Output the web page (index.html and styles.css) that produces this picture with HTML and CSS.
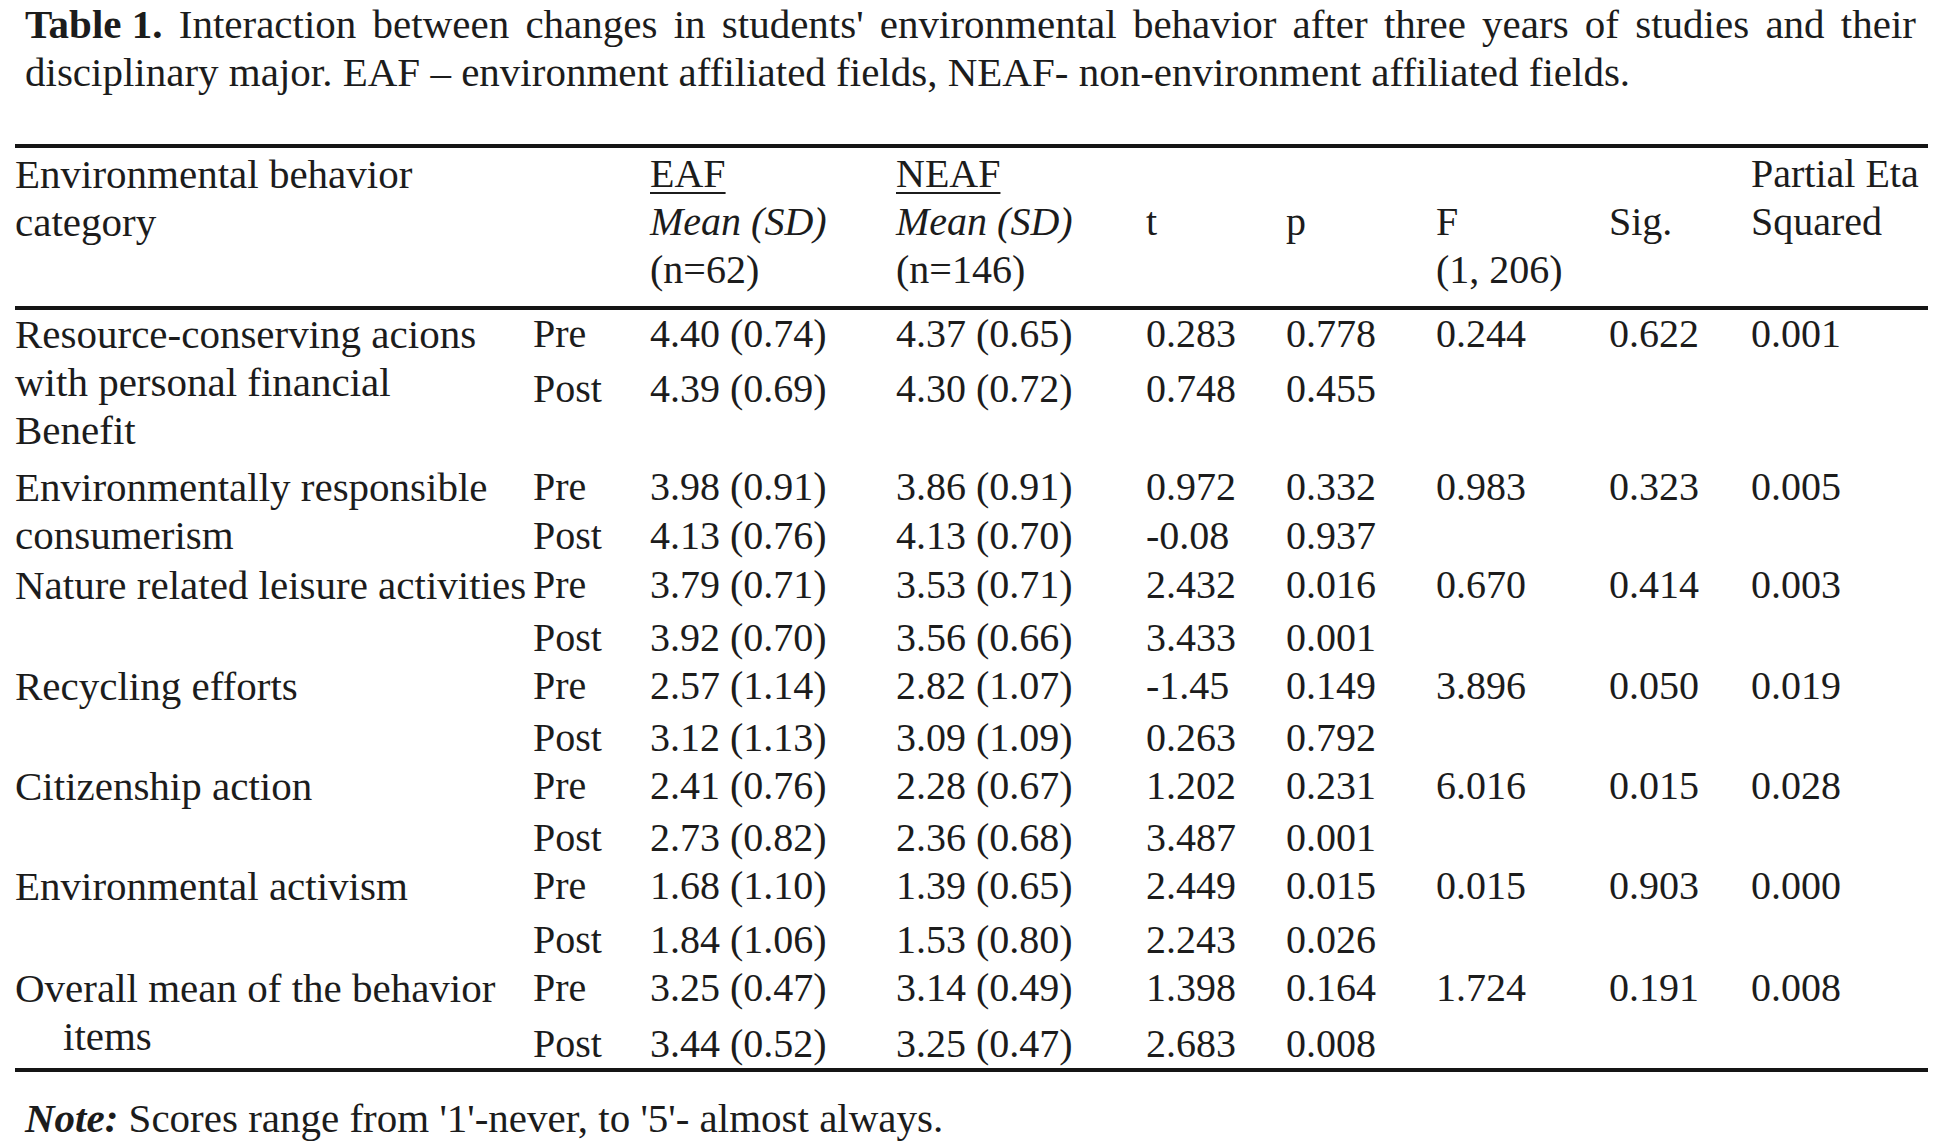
FILE: index.html
```html
<!DOCTYPE html>
<html lang="en">
<head>
<meta charset="utf-8">
<title>Table 1</title>
<link rel="stylesheet" href="styles.css">
</head>
<body>
<div class="page">
  <p class="caption"><b class="lbl">Table 1.</b> Interaction between changes in students' environmental behavior after three years of studies and their disciplinary major. EAF – environment affiliated fields, NEAF- non-environment affiliated fields.</p>

  <table class="data">
    <colgroup>
      <col class="c-cat">
      <col class="c-pp">
      <col class="c-eaf">
      <col class="c-neaf">
      <col class="c-t">
      <col class="c-p">
      <col class="c-f">
      <col class="c-sig">
      <col class="c-eta">
    </colgroup>
    <thead>
      <tr>
        <th class="wide">Environmental behavior<br>category</th>
        <th></th>
        <th><span class="ul">EAF</span><br><i>Mean (SD)</i><br>(n=62)</th>
        <th><span class="ul">NEAF</span><br><i>Mean (SD)</i><br>(n=146)</th>
        <th class="l2">t</th>
        <th class="l2">p</th>
        <th class="l2">F<br>(1, 206)</th>
        <th class="l2">Sig.</th>
        <th>Partial Eta<br>Squared</th>
      </tr>
    </thead>
    <tbody>
      <tr class="h55">
        <td class="cat" rowspan="2">Resource-conserving acions with personal financial<br>Benefit</td>
        <td>Pre</td><td>4.40 (0.74)</td><td>4.37 (0.65)</td><td>0.283</td><td>0.778</td><td>0.244</td><td>0.622</td><td>0.001</td>
      </tr>
      <tr class="h98">
        <td>Post</td><td>4.39 (0.69)</td><td>4.30 (0.72)</td><td>0.748</td><td>0.455</td><td></td><td></td><td></td>
      </tr>
    </tbody>
    <tbody>
      <tr class="h49">
        <td class="cat" rowspan="2">Environmentally responsible consumerism</td>
        <td>Pre</td><td>3.98 (0.91)</td><td>3.86 (0.91)</td><td>0.972</td><td>0.332</td><td>0.983</td><td>0.323</td><td>0.005</td>
      </tr>
      <tr class="h49">
        <td>Post</td><td>4.13 (0.76)</td><td>4.13 (0.70)</td><td>-0.08</td><td>0.937</td><td></td><td></td><td></td>
      </tr>
    </tbody>
    <tbody>
      <tr class="h53">
        <td class="cat" rowspan="2">Nature related leisure activities</td>
        <td>Pre</td><td>3.79 (0.71)</td><td>3.53 (0.71)</td><td>2.432</td><td>0.016</td><td>0.670</td><td>0.414</td><td>0.003</td>
      </tr>
      <tr class="h48">
        <td>Post</td><td>3.92 (0.70)</td><td>3.56 (0.66)</td><td>3.433</td><td>0.001</td><td></td><td></td><td></td>
      </tr>
    </tbody>
    <tbody>
      <tr class="h52">
        <td class="cat" rowspan="2">Recycling efforts</td>
        <td>Pre</td><td>2.57 (1.14)</td><td>2.82 (1.07)</td><td>-1.45</td><td>0.149</td><td>3.896</td><td>0.050</td><td>0.019</td>
      </tr>
      <tr class="h48">
        <td>Post</td><td>3.12 (1.13)</td><td>3.09 (1.09)</td><td>0.263</td><td>0.792</td><td></td><td></td><td></td>
      </tr>
    </tbody>
    <tbody>
      <tr class="h52">
        <td class="cat" rowspan="2">Citizenship action</td>
        <td>Pre</td><td>2.41 (0.76)</td><td>2.28 (0.67)</td><td>1.202</td><td>0.231</td><td>6.016</td><td>0.015</td><td>0.028</td>
      </tr>
      <tr class="h48">
        <td>Post</td><td>2.73 (0.82)</td><td>2.36 (0.68)</td><td>3.487</td><td>0.001</td><td></td><td></td><td></td>
      </tr>
    </tbody>
    <tbody>
      <tr class="h54">
        <td class="cat" rowspan="2">Environmental activism</td>
        <td>Pre</td><td>1.68 (1.10)</td><td>1.39 (0.65)</td><td>2.449</td><td>0.015</td><td>0.015</td><td>0.903</td><td>0.000</td>
      </tr>
      <tr class="h48">
        <td>Post</td><td>1.84 (1.06)</td><td>1.53 (0.80)</td><td>2.243</td><td>0.026</td><td></td><td></td><td></td>
      </tr>
    </tbody>
    <tbody>
      <tr class="h56">
        <td class="cat hang" rowspan="2">Overall mean of the behavior items</td>
        <td>Pre</td><td>3.25 (0.47)</td><td>3.14 (0.49)</td><td>1.398</td><td>0.164</td><td>1.724</td><td>0.191</td><td>0.008</td>
      </tr>
      <tr class="h48">
        <td>Post</td><td>3.44 (0.52)</td><td>3.25 (0.47)</td><td>2.683</td><td>0.008</td><td></td><td></td><td></td>
      </tr>
    </tbody>
  </table>

  <p class="note"><b><i>Note:</i></b> Scores range from '1'-never, to '5'- almost always.</p>
</div>
</body>
</html>
```

FILE: styles.css
```css
html, body {
  margin: 0;
  padding: 0;
  background: #ffffff;
}

body {
  font-family: "Liberation Serif", "Times New Roman", serif;
  font-size: 40px;
  line-height: 48px;
  color: #1c1c1c;
}

.page {
  padding: 0 28px 0 15px;
  width: 1913px;
}

.caption {
  margin: 0 12px 0 10px;
  font-size: 41px;
  text-align: justify;
}

.caption .lbl {
  display: inline-block;
  font-weight: bold;
}

.data {
  margin-top: 48px;
  width: 1913px;
  table-layout: fixed;
  border-collapse: separate;
  border-spacing: 0;
  border-top: 4px solid #151515;
  border-bottom: 4px solid #151515;
}

.c-cat { width: 518px; }
.c-pp { width: 117px; }
.c-eaf { width: 246px; }
.c-neaf { width: 250px; }
.c-t { width: 140px; }
.c-p { width: 150px; }
.c-f { width: 173px; }
.c-sig { width: 142px; }
.c-eta { width: 177px; }

.data th {
  font-weight: normal;
  text-align: left;
  vertical-align: top;
  white-space: nowrap;
  padding: 2px 0 12px 0;
  border-bottom: 4px solid #151515;
}

.data th.wide {
  font-size: 41px;
}

.data th.l2 {
  padding-top: 50px;
}

.ul {
  text-decoration: underline;
  text-decoration-thickness: 2px;
  text-underline-offset: 5px;
}

.data td {
  padding: 0;
  vertical-align: top;
  text-align: left;
  white-space: nowrap;
}

.data td.cat {
  white-space: normal;
  font-size: 41px;
}

.data td.hang {
  padding-left: 48px;
  text-indent: -48px;
}

.h48 td { height: 48px; }
.h49 td { height: 49px; }
.h52 td { height: 52px; }
.h53 td { height: 53px; }
.h54 td { height: 54px; }
.h55 td { height: 55px; }
.h56 td { height: 56px; }
.h98 td { height: 98px; }

.data td.cat { height: auto; }

.note {
  margin: 22px 0 0 10px;
  font-size: 41px;
}
```
